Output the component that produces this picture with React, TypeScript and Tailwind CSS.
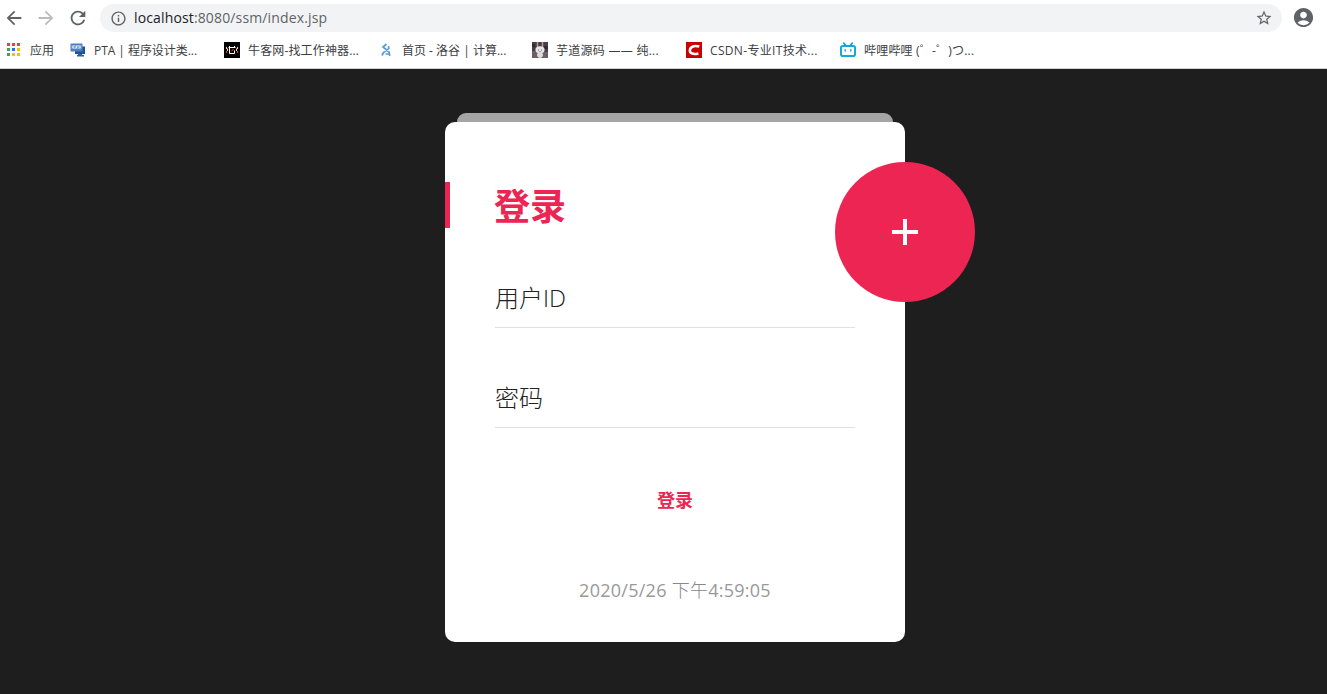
import { useState, type ReactNode } from "react";
import { MdAccountCircle, MdArrowBack, MdArrowForward, MdInfoOutline, MdRefresh, MdStarBorder } from "react-icons/md";

interface Bookmark {
  id: string;
  title: string;
  icon: ReactNode;
  className?: string;
}

const appDots = [
  "bg-[#ea4335]", "bg-[#ea4335]", "bg-[#ea4335]",
  "bg-[#34a853]", "bg-[#1a73e8]", "bg-[#fbbc05]",
  "bg-[#34a853]", "bg-[#fbbc05]", "bg-[#fbbc05]",
];

const PtaIcon = () => (
  <svg width="16" height="16" viewBox="0 0 16 16">
    <path d="M5 4.5h10V12H5z" fill="#1d5396" />
    <path d="M8 12h4v1h2v1.5H7V13h1z" fill="#2c5f9e" />
    <rect x="0.5" y="1.5" width="12" height="8" rx="0.5" fill="#4f80bd" />
    <path d="M1.5 3h10v4h-10z" fill="#7fa6d6" />
    <path d="M4 3.5 2.5 5 4 6.5M9 3.5 10.5 5 9 6.5M7.2 3.5 5.8 6.5" fill="none" stroke="#fff" />
  </svg>
);

const NowcoderIcon = () => (
  <svg width="16" height="16" viewBox="0 0 16 16">
    <rect width="16" height="16" fill="#000" />
    <path d="M5.5 4v2M10.5 4v2M4.5 5.5h7M5.5 6v5.5h5V8.5" fill="none" stroke="#fff" />
    <path d="M2.5 5v2M3.5 7v2M13.5 5v2M12.5 7v2" fill="none" stroke="#e8ded8" />
    <path d="M2.5 9v2M13.5 9v2M3.5 6v1M12.5 6v1M9.5 7 7.5 9.5" stroke="#d5472f" />
  </svg>
);

const LuoguIcon = () => (
  <svg width="16" height="16" viewBox="0 0 16 16">
    <path d="M8.5 2 5 5l6 5 .8 4M10.5 4l.3 2.4L5.5 10.5 4 13.5M7.5 12h3.5" fill="none" stroke="#579ddd" strokeWidth="1.7" />
  </svg>
);

const RabbitIcon = () => (
  <svg width="16" height="16" viewBox="0 0 16 16">
    <rect width="16" height="16" fill="#493f43" />
    <path d="M0 9h5v7H0zM11 10h5v6h-5z" fill="#6b6063" />
    <path d="M0 2h3v3H0zM12 4h4v3h-4z" fill="#302a35" />
    <path d="M5.5 0v5M10.5 0v5" stroke="#b89da3" strokeWidth="1.4" />
    <ellipse cx="8" cy="7.8" rx="4.6" ry="3.5" fill="#e5e4e8" />
    <ellipse cx="8" cy="13" rx="3" ry="3" fill="#ddd9dc" />
    <path d="M6 8h1M9 8h1M7.5 9.5h1" stroke="#68606c" />
  </svg>
);

const CsdnIcon = () => (
  <svg width="16" height="16" viewBox="0 0 16 16">
    <rect width="16" height="16" fill="#ca0000" />
    <path d="M13.3 4.6C8.5 3.3 4.4 4.2 3.9 8c-.4 3.9 3.9 4.6 8.5 3.4" fill="none" stroke="#fff" strokeWidth="2.6" />
  </svg>
);

const BilibiliIcon = () => (
  <svg width="16" height="16" viewBox="0 0 16 16" fill="none" stroke="#14a7dc">
    <path d="m3.8 1.2 1.4 1.6M12.2 1.2l-1.4 1.6" strokeWidth="1.8" strokeLinecap="round" />
    <rect x="1" y="4" width="14" height="10" rx="1.8" strokeWidth="2" />
    <path d="M5.2 7.3v2.2M10.8 7.3v2.2" strokeWidth="1.5" />
  </svg>
);

const bookmarks: Bookmark[] = [
  { id: "pta", title: "PTA | 程序设计类...", icon: <PtaIcon />, className: "tracking-[-0.05px]" },
  { id: "nowcoder", title: "牛客网-找工作神器...", icon: <NowcoderIcon />, className: "tracking-[0.15px]" },
  { id: "luogu", title: "首页 - 洛谷 | 计算...", icon: <LuoguIcon /> },
  { id: "iocoder", title: "芋道源码 —— 纯...", icon: <RabbitIcon />, className: "tracking-[0.27px]" },
  { id: "csdn", title: "CSDN-专业IT技术...", icon: <CsdnIcon />, className: "tracking-[0.33px]" },
  { id: "bilibili", title: "哔哩哔哩 (゜-゜)つ...", icon: <BilibiliIcon />, className: "tracking-[0.2px]" },
];

function Field({ label, type, className }: { label: string; type: string; className: string }) {
  const [value, setValue] = useState("");

  return (
    <label className={`relative block h-[60px] border-b border-[#e0e0e0] ${className}`}>
      {!value && (
        <span className="absolute left-0 top-0 text-2xl leading-[60px] font-light text-[#212121]">{label}</span>
      )}
      <input
        type={type}
        value={value}
        onChange={(e) => setValue(e.target.value)}
        className="relative w-full h-full bg-transparent text-2xl outline-none"
      />
    </label>
  );
}

export default function App() {
  return (
    <div className="h-screen flex flex-col overflow-hidden bg-[#1e1e1e] font-['Open_Sans','Noto_Sans_CJK_SC',sans-serif]">
      {/* Browser toolbar */}
      <header className="h-[69px] shrink-0 bg-white border-b border-[#d0d0d0]">
        <div className="h-9 flex items-center text-[#5f6368]">
          <button className="ml-[3px] pb-px w-[22px] flex justify-center"><MdArrowBack size={22} /></button>
          <button className="ml-[10px] pb-px w-[22px] flex justify-center text-[#babcbe]"><MdArrowForward size={22} /></button>
          <button className="ml-[10px] pb-px w-[22px] flex justify-center"><MdRefresh size={22} /></button>
          <div className="ml-[11px] w-[1182px] h-7 rounded-full bg-[#f1f3f4] flex items-center">
            <MdInfoOutline size={17} className="ml-[10px]" />
            <span className="ml-[7px] text-sm leading-7 text-[#5f6368] tracking-[0.14px]">
              <span className="text-[#202124]">localhost</span>:8080/ssm/index.jsp
            </span>
            <MdStarBorder size={18} className="ml-auto mr-[9px]" />
          </div>
          <MdAccountCircle size={23} className="ml-[10px] mb-px" />
        </div>
        <nav className="h-[28px] flex items-center text-xs text-[#3c4043] whitespace-nowrap">
          <div className="w-[64px] ml-[6px] shrink-0 flex items-center">
            <div className="w-4 grid grid-cols-[3px_3px_3px] gap-[2px] pl-px pb-[2px]">
              {appDots.map((color, i) => (
                <i key={i} className={`w-[3px] h-[3px] ${color}`} />
              ))}
            </div>
            <span className="ml-2 pt-[2px]">应用</span>
          </div>
          {bookmarks.map((b) => (
            <div key={b.id} className="w-[154px] shrink-0 flex items-center">
              {b.icon}
              <span className={`ml-2 pt-[2px] ${b.className ?? ""}`}>{b.title}</span>
            </div>
          ))}
        </nav>
      </header>

      {/* Login */}
      <main className="w-[460px] ml-[445px] pt-[44px]">
        <div className="mx-3 h-[9px] rounded-t-[9px] bg-[#a5a5a5]" />
        <section className="relative h-[520px] rounded-[10px] bg-white pt-[60px]">
          <div className="h-[46px] border-l-[5px] border-[#ed2553] pl-[44px]">
            <h1 className="text-[36px] leading-[50px] font-bold text-[#ed2553]">登录</h1>
          </div>
          <form className="px-[50px]" onSubmit={(e) => e.preventDefault()}>
            <Field label="用户ID" type="text" className="mt-[40px]" />
            <Field label="密码" type="password" className="mt-[40px]" />
            <div className="mt-[42px] h-[60px] flex items-center justify-center">
              <button className="text-lg font-bold text-[#ed2553]">登录</button>
            </div>
          </form>
          <p className="mt-[30px] h-[60px] text-center text-lg leading-[60px] tracking-[0.26px] text-[#999]">
            2020/5/26 <span className="font-light text-[#888]">下午</span>4:59:05
          </p>
          <button className="absolute top-[40px] -right-[70px] w-[140px] h-[140px] rounded-full bg-[#ed2553] flex items-center justify-center">
            <svg width="26" height="26" viewBox="0 0 26 26">
              <path d="M11 0h4v11h11v4H15v11h-4V15H0v-4h11z" fill="#fff" />
            </svg>
          </button>
        </section>
      </main>
    </div>
  );
}
